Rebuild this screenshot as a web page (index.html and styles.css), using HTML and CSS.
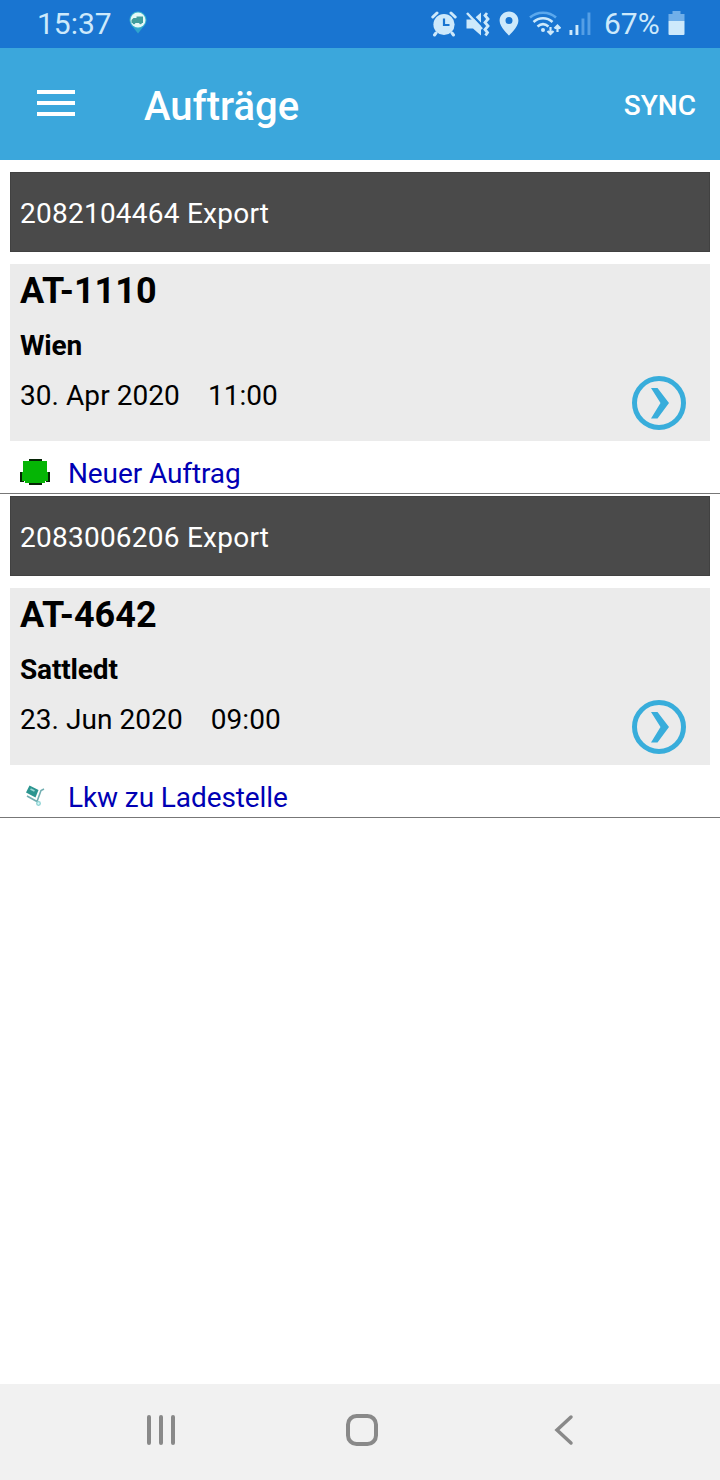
FILE: index.html
```html
<!DOCTYPE html>
<html lang="de">
<head>
<meta charset="utf-8">
<title>Aufträge</title>
<link rel="stylesheet" href="styles.css">
</head>
<body>
<div class="screen">
  <div class="statusbar">
    <span class="clock">15:37</span>
    <svg class="truck-pin" width="20" height="26" viewBox="0 0 20 26">
      <path d="M2.500 13L10 22.500L17.500 13Z" fill="#2fa5cd"/>
      <circle cx="10" cy="9" r="8.500" fill="#3cb4cd"/>
      <circle cx="10" cy="9" r="7.500" fill="#e4f8f6"/>
      <path d="M8.500 5.500H15V12H3.500V9L5.500 7H8.500Z" fill="#419e9d"/>
      <circle cx="6" cy="12" r="1.300" fill="#419e9d"/><circle cx="12.500" cy="12" r="1.300" fill="#419e9d"/>
    </svg>
    <div class="system-icons">
      <svg width="26" height="26" viewBox="0 0 26 26" fill="none" stroke="#cde9fb">
        <circle cx="13" cy="13.500" r="10.600" fill="#cde9fb" stroke="none"/>
        <path d="M1.800 6L6 2M20 2L24.200 6M5 22L3.500 24M21 22L22.500 24" stroke-width="3" stroke-linecap="round"/>
        <path d="M13 7.500V14H18.500" stroke="#1975d1" stroke-width="2.200"/>
      </svg>
      <svg width="26" height="26" viewBox="0 0 26 26" fill="none" stroke="#cde9fb">
        <path d="M1.500 8.500H8L16 1.500V24.500L8 17.500H1.500Z" fill="#cde9fb" stroke="none"/>
        <path d="M3 0L18 15.500" stroke="#1975d1" stroke-width="2.500"/>
        <path d="M2 2L17 18" stroke-width="2.500"/>
        <path d="M22 2L20 4.500L23 8L20 11.500L23 15L20 18.500L22.500 21.500L20.500 24.500" stroke-width="2.800"/>
      </svg>
      <svg width="20" height="26" viewBox="0 0 20 26">
        <path d="M10 .5C4.800 .5 .6 4.600 .6 9.700C.6 16 10 24.500 10 24.500S19.400 16 19.400 9.700C19.400 4.600 15.200 .5 10 .5ZM10 6A3.500 3.500 0 1 1 10 13A3.500 3.500 0 0 1 10 6Z" fill="#cde9fb" fill-rule="evenodd"/>
      </svg>
      <svg class="wifi" width="32" height="26" viewBox="0 0 32 26" fill="none" stroke="#cde9fb" stroke-width="2.500">
        <path d="M1 6.500C8 0 20 0 27 6.500" stroke="#5ba8ed"/>
        <path d="M4.500 11C10 6 18 6 23.500 11M8.500 15.500C12 12.500 16 12.500 19.500 15.500"/>
        <circle cx="14" cy="19" r="2" fill="#cde9fb" stroke="none"/>
        <path d="M21.500 16V23M18.500 20L21.500 23L24.500 20M28.500 21V15M25.500 17.500L28.500 14.500L31.500 17.500" stroke-width="2.200"/>
      </svg>
      <svg class="signal" width="22" height="26" viewBox="0 0 22 26">
        <path d="M.5 19H3.400V24H.5ZM6.500 14H9.400V24H6.500Z" fill="#cde9fb"/>
        <path d="M12.500 7.500H15.400V24H12.500ZM18.500 1.500H21.400V24H18.500Z" fill="#559fe5"/>
      </svg>
      <span class="percent">67%</span>
      <svg class="battery" width="17" height="26" viewBox="0 0 17 26">
        <path d="M4.500 0H12.500V3H16.500V10H.5V3H4.500Z" fill="#70afe9"/>
        <path d="M.5 10H16.500V23Q16.500 24 15.500 24H1.500Q.5 24 .5 23Z" fill="#cde9fb"/>
      </svg>
    </div>
  </div>

  <header class="appbar">
    <div class="menu"><span></span><span></span><span></span></div>
    <h1 class="title">Aufträge</h1>
    <span class="sync">SYNC</span>
  </header>

  <main class="orders">
    <section class="order">
      <div class="order-head">2082104464 Export</div>
      <div class="card">
        <div class="details">
          <div class="postcode">AT-1110</div>
          <div class="city">Wien</div>
          <div class="date"><span>30. Apr 2020</span><span>11:00</span></div>
        </div>
        <svg class="go" width="56" height="56" viewBox="0 0 56 56">
          <circle cx="28" cy="28" r="24.500" fill="none" stroke="#38addb" stroke-width="5"/>
          <path d="M20 13H26.500L38 28L26.500 43.500H20L29.500 28Z" fill="#38addb"/>
        </svg>
      </div>
      <div class="state">
        <svg width="30" height="28" viewBox="0 0 30 28">
          <path d="M9 1H22V5H9ZM9 23H22V27H9ZM0 14H4V24H0ZM26 14H30V24H26Z" fill="#062406"/>
          <path d="M3 3H27V14H28V23H25V25H5V23H2V14H3Z" fill="#05b505"/>
        </svg>
        <span class="state-text">Neuer Auftrag</span>
      </div>
    </section>

    <section class="order">
      <div class="order-head">2083006206 Export</div>
      <div class="card">
        <div class="details">
          <div class="postcode">AT-4642</div>
          <div class="city">Sattledt</div>
          <div class="date"><span>23. Jun 2020</span><span>09:00</span></div>
        </div>
        <svg class="go" width="56" height="56" viewBox="0 0 56 56">
          <circle cx="28" cy="28" r="24.500" fill="none" stroke="#38addb" stroke-width="5"/>
          <path d="M20 13H26.500L38 28L26.500 43.500H20L29.500 28Z" fill="#38addb"/>
        </svg>
      </div>
      <div class="state">
        <svg width="30" height="28" viewBox="0 0 30 28">
          <path d="M9.500 3.500L18.500 8L15.500 15.500L6 10.500Z" fill="#2c9590"/>
          <path d="M10.500 7L14.500 9" stroke="#9ad8d4" stroke-width="1.800"/>
          <path d="M7 14L17 19.500L21 8.500L24 7" fill="none" stroke="#72aeb1" stroke-width="1.600"/>
          <circle cx="18.500" cy="21.500" r="1.800" fill="#d9f7f6" stroke="#8bd2d3" stroke-width="1.300"/>
        </svg>
        <span class="state-text">Lkw zu Ladestelle</span>
      </div>
    </section>
  </main>

  <nav class="navbar">
    <svg width="30" height="32" viewBox="0 0 30 32"><path d="M3 3V29M15 3V29M27 3V29" stroke="#898989" stroke-width="4" stroke-linecap="round"/></svg>
    <svg class="home" width="32" height="32" viewBox="0 0 32 32"><rect x="2" y="2" width="28" height="28" rx="8.500" fill="none" stroke="#898989" stroke-width="4"/></svg>
    <svg class="back" width="20" height="32" viewBox="0 0 20 32"><path d="M17 3L3 16L17 29" fill="none" stroke="#898989" stroke-width="3.500" stroke-linecap="round"/></svg>
  </nav>
</div>
</body>
</html>
```
FILE: styles.css
```css
* { box-sizing: border-box; }
body {
  margin: 0;
  background: #fff;
  font-family: Roboto, "Liberation Sans", sans-serif;
}
svg { display: block; flex: none; }
.screen {
  display: flex;
  flex-direction: column;
  width: 720px;
  height: 1480px;
}
.statusbar {
  display: flex;
  align-items: center;
  height: 48px;
  padding: 0 35px 0 37px;
  background: #1975d1;
  color: #cde9fb;
  font-size: 30px;
  line-height: 48px;
}
.clock { width: 91px; }
.system-icons {
  display: flex;
  align-items: center;
  margin-left: auto;
}
.system-icons svg + svg { margin-left: 8px; }
.system-icons .wifi { margin-left: 10px; }
.system-icons .signal { margin-left: 8px; }
.percent {
  width: 56px;
  margin-left: 13px;
}
.battery { margin-left: 8px; }
.appbar {
  display: flex;
  align-items: center;
  height: 112px;
  padding: 2px 24px 0 37px;
  background: #3ba7dc;
  color: #fff;
}
.menu {
  display: flex;
  flex-direction: column;
  gap: 7px;
  width: 38px;
  margin: 0 69px 4px 0;
}
.menu span { height: 4px; background: #fff; }
.title {
  margin: 0;
  padding-top: 4px;
  font-size: 40px;
  line-height: 48px;
  font-weight: 500;
}
.sync {
  margin-left: auto;
  padding-top: 2px;
  font-size: 28px;
  line-height: 32px;
  font-weight: 500;
}
.orders {
  display: flex;
  flex: 1;
  flex-direction: column;
  gap: 2px;
  padding-top: 12px;
}
.order { border-bottom: 1px solid #777; }
.order-head {
  height: 80px;
  margin: 0 10px 12px;
  padding: 2px 9px 0;
  background: #4a4a4a;
  border: 1px solid #414141;
  color: #fff;
  font-size: 28px;
  line-height: 78px;
  letter-spacing: .24px;
}
.card {
  display: flex;
  justify-content: space-between;
  align-items: flex-end;
  height: 177px;
  margin: 0 10px;
  padding: 0 23px 10px 10px;
  background: #ebebeb;
  color: #000;
}
.details { align-self: flex-start; }
.postcode {
  font-size: 36px;
  line-height: 54px;
  font-weight: 700;
}
.city {
  padding-top: 1px;
  font-size: 28px;
  line-height: 54px;
  font-weight: 700;
  letter-spacing: -.15px;
}
.date {
  display: flex;
  gap: 28px;
  font-size: 28px;
  line-height: 46px;
  letter-spacing: .06px;
}
.state {
  display: flex;
  align-items: center;
  gap: 18px;
  height: 52px;
  padding: 10px 20px 0;
  color: #0000b4;
  font-size: 28px;
  line-height: 38px;
  letter-spacing: -.1px;
}
.state-text { padding-top: 4px; }
.navbar {
  display: flex;
  align-items: center;
  height: 96px;
  padding: 0 146px 4px;
  background: #f1f1f1;
}
.home { margin-left: 170px; }
.back { margin-left: auto; }
```
